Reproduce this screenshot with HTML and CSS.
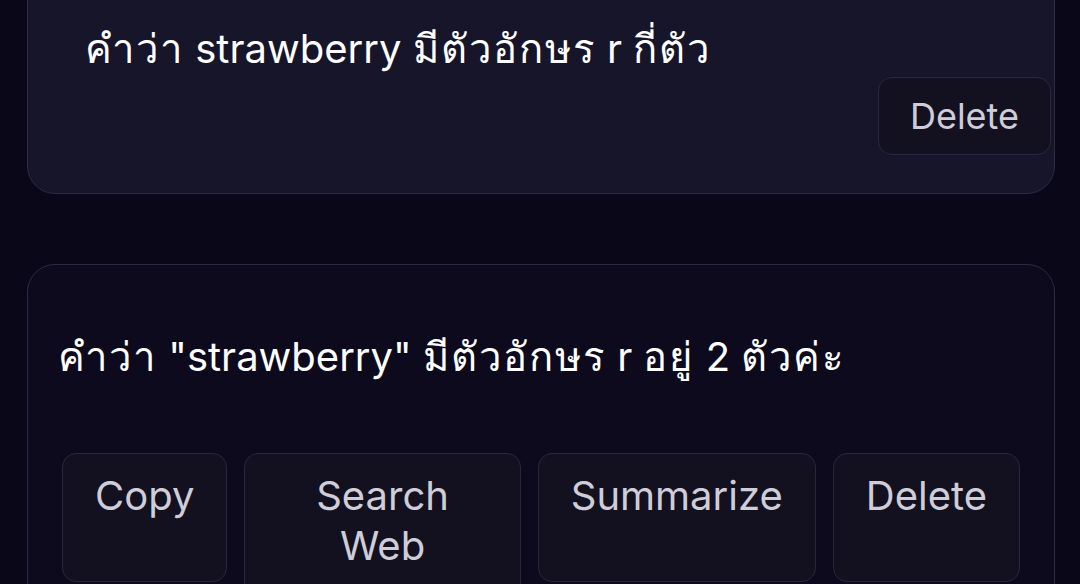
FILE: index.html
```html
<!DOCTYPE html>
<html lang="th">
<head>
  <meta charset="UTF-8" />
  <meta name="viewport" content="width=device-width, initial-scale=1.0"/>
  <title>Chat</title>
  <link rel="stylesheet" href="styles.css">
</head>
<body>

  <!-- Mensaje del usuario (cortado arriba) -->
  <div class="card user-card">
    <p class="msg"><span class="th">คำว่า</span> strawberry <span class="th">มีตัวอักษร</span> r <span class="th">กี่ตัว</span></p>
    <div class="actions actions-right">
      <button class="btn">Delete</button>
    </div>
  </div>

  <!-- Respuesta del asistente -->
  <div class="card bot-card">
    <p class="msg"><span class="th">คำว่า</span> "strawberry" <span class="th">มีตัวอักษร</span> r <span class="th">อยู่</span> 2 <span class="th">ตัวค่ะ</span></p>
    <div class="actions">
      <button class="btn">Copy</button>
      <button class="btn">Search Web</button>
      <button class="btn">Summarize</button>
      <button class="btn">Delete</button>
    </div>
  </div>

</body>
</html>
```

FILE: styles.css
```css
body {
  margin: 0;
  padding: 0 25px 0 27px;
  background: #0a0818;
  font-family: Inter, "Noto Sans", "DejaVu Sans", sans-serif;
  height: 584px;
  overflow: hidden;
}

.card {
  border: 1px solid #2d2b42;
  border-radius: 28px;
}

.msg {
  margin: 0;
  color: #ffffff;
  font-size: 40px;
  line-height: 50px;
}

/* el tailandés de respaldo es más estrecho */
.th {
  letter-spacing: 2px;
}

.user-card {
  margin-top: -40px;
  background: #17152a;
  padding: 63px 3px 38px 57px;
}

.bot-card {
  margin-top: 70px;
  background: #0c0a1c;
  padding: 67px 30px 40px 30px;
}

.actions {
  display: flex;
  gap: 17px;
  margin-top: 71px;
  padding: 0 4px;
}

.actions-right {
  justify-content: flex-end;
  margin-top: 3px;
  padding: 0;
}

.btn {
  font-family: inherit;
  font-size: 40px;
  line-height: 50px;
  color: #cfcdd8;
  background: #131120;
  border: 1px solid #29273b;
  border-radius: 14px;
  padding: 17px 32px 60px;
  text-align: center;
  align-self: flex-start;
}

.actions-right .btn {
  font-size: 36px;
  padding: 13px 31px;
}
```
